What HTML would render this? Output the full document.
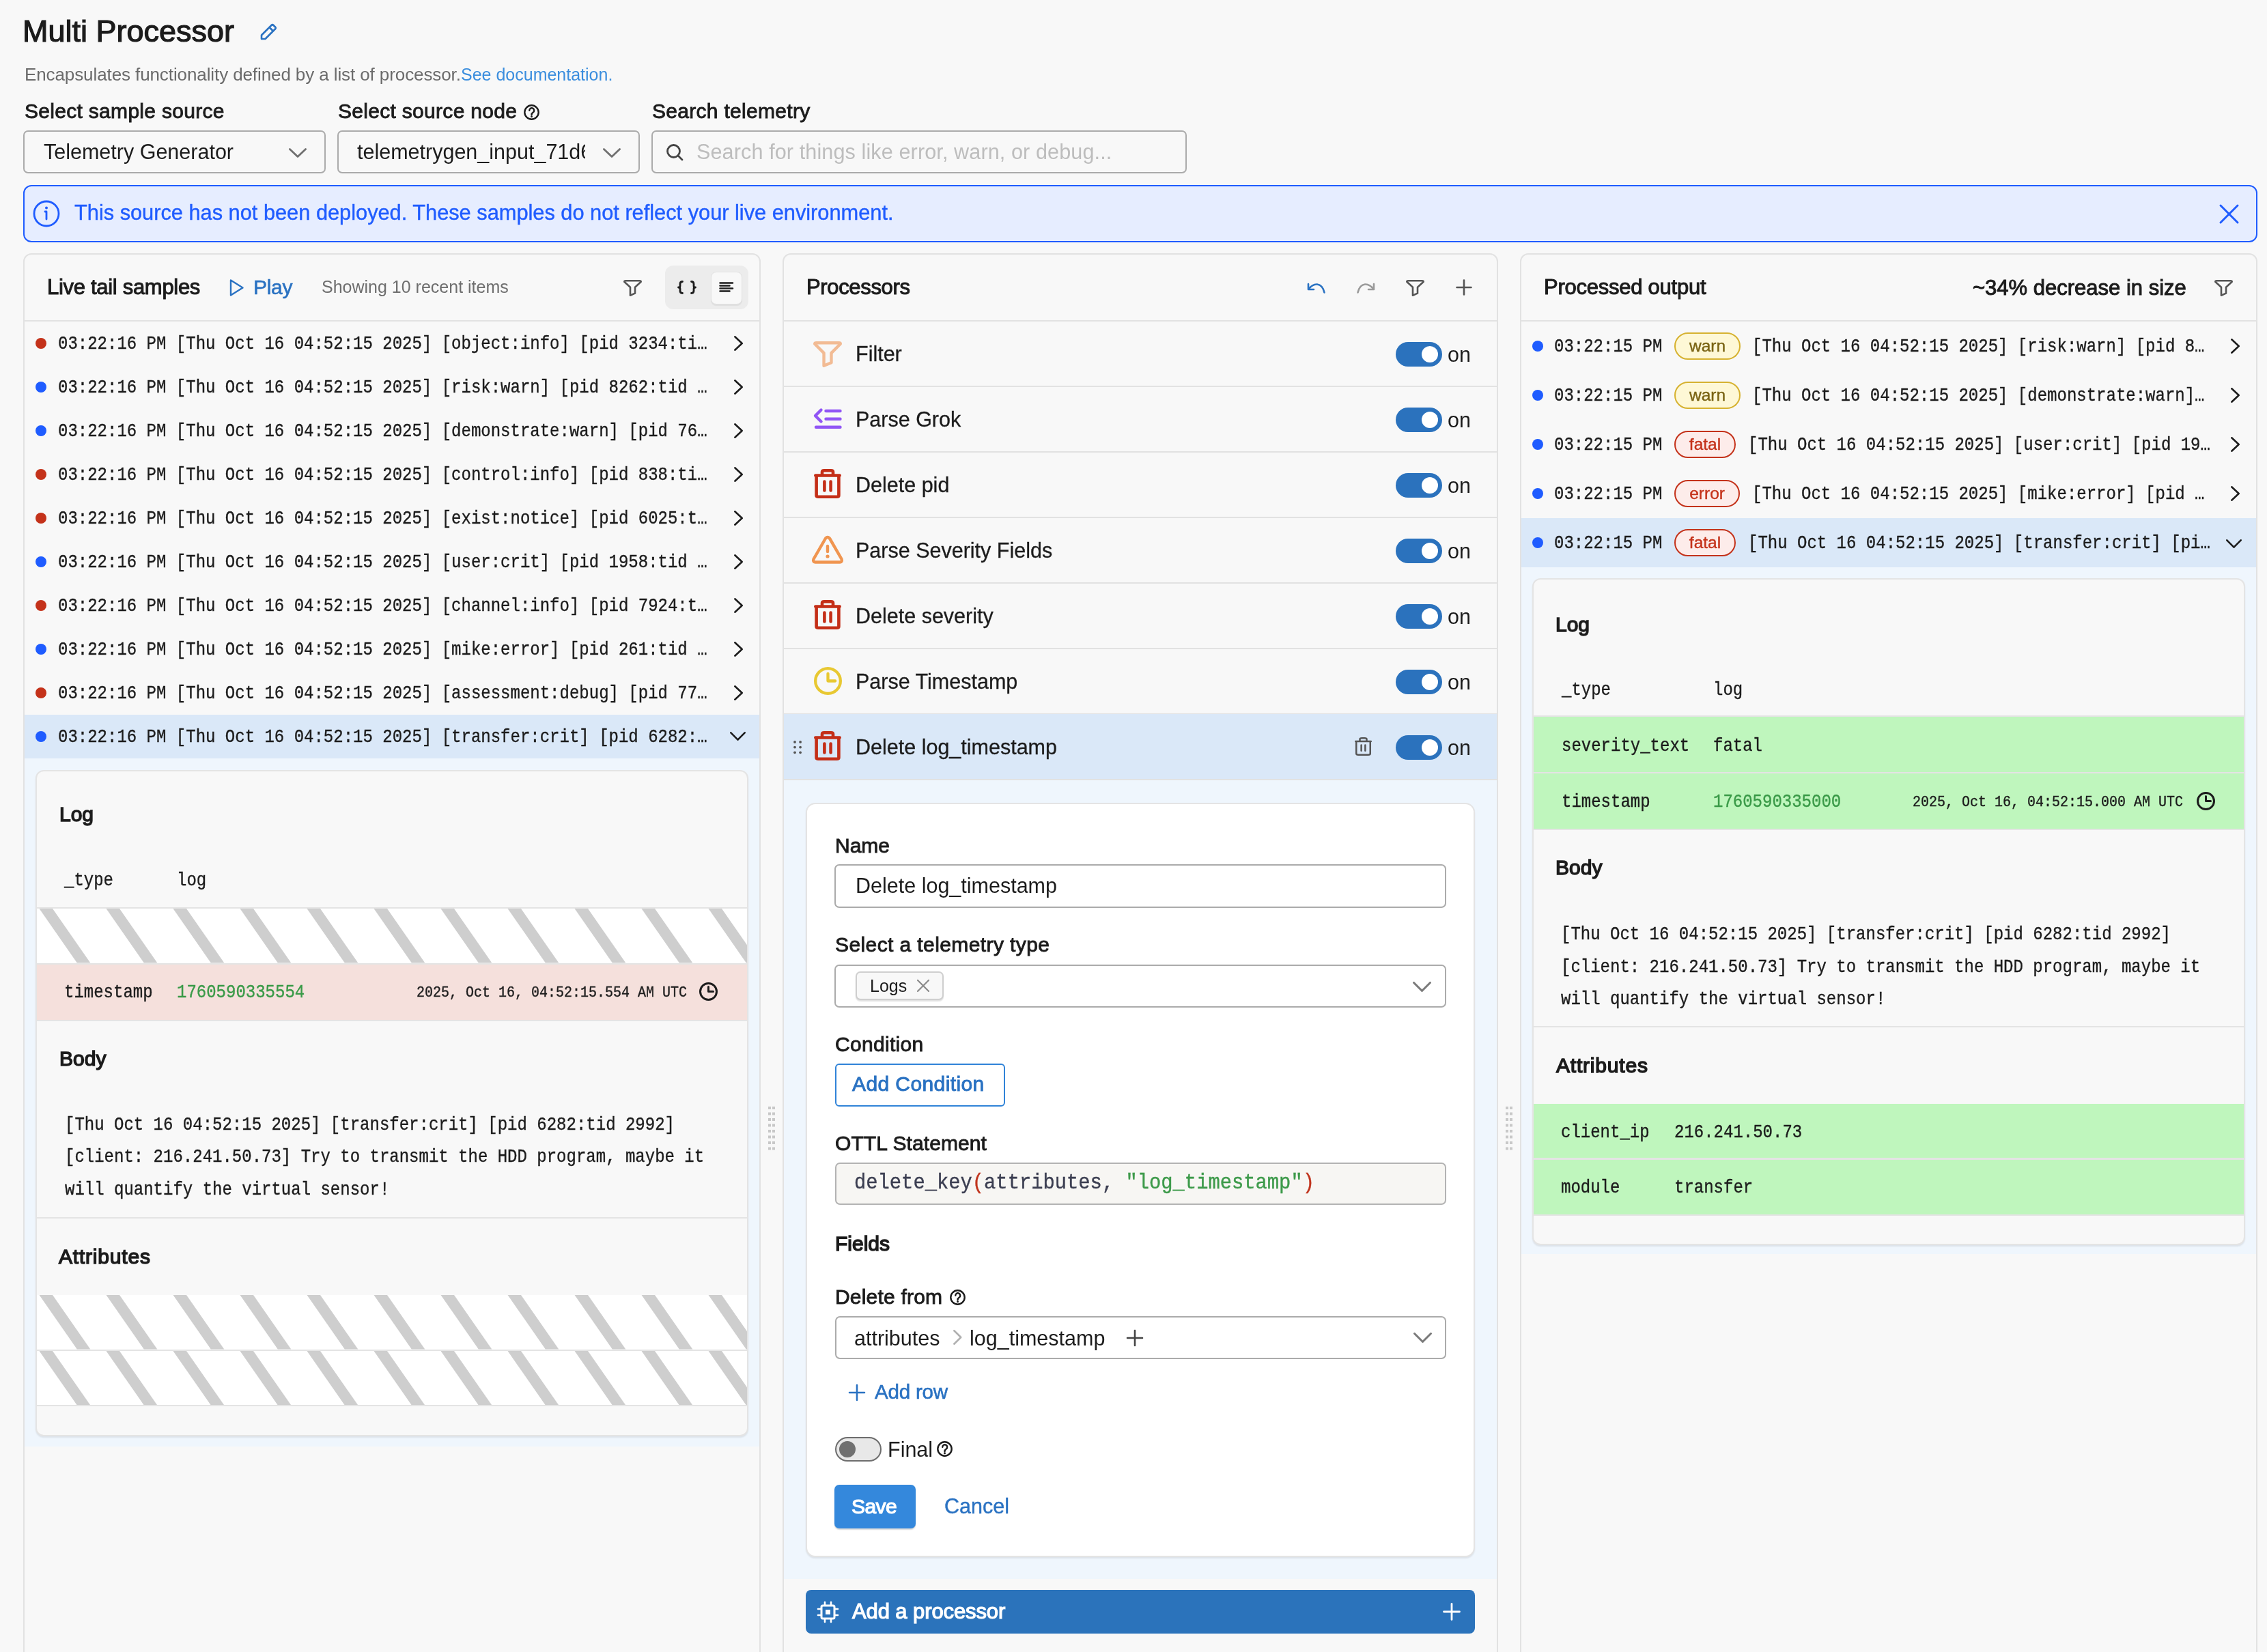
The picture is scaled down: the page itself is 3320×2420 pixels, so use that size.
<!DOCTYPE html><html><head><meta charset="utf-8"><title>Multi Processor</title><style>
html,body{margin:0;padding:0;}
body{width:3320px;height:2420px;overflow:hidden;position:relative;background:#f8f8f8;font-family:"Liberation Sans", sans-serif;}
.t{position:absolute;white-space:pre;line-height:1;will-change:transform;}
.b{position:absolute;box-sizing:border-box;}
</style></head><body>
<div class="t " style="left:33.0px;top:22.9px;font-size:45px;color:#1c1c1c;-webkit-text-stroke:1.2px #1c1c1c;">Multi Processor</div>
<svg class="b" style="left:378px;top:32px;" width="30" height="30" viewBox="0 0 30 30" fill="none"><path d="M5 25 L5 19.5 L19.5 5 Q21 3.5 22.5 5 L25 7.5 Q26.5 9 25 10.5 L10.5 25 Z M16.5 8 L22 13.5" stroke="#2a72c2" stroke-width="2.6" stroke-linejoin="round"/></svg>
<div class="t " style="left:36.0px;top:96.0px;font-size:26px;color:#6b6b6b;letter-spacing:-0.1px;">Encapsulates functionality defined by a list of processor.</div>
<div class="t " style="left:675.0px;top:96.8px;font-size:25px;color:#3b8ede;">See documentation.</div>
<div class="t " style="left:36.0px;top:148.3px;font-size:30px;color:#1c1c1c;letter-spacing:0.3px;-webkit-text-stroke:0.9px #1c1c1c;">Select sample source</div>
<div class="t " style="left:495.0px;top:148.3px;font-size:30px;color:#1c1c1c;letter-spacing:0.3px;-webkit-text-stroke:0.9px #1c1c1c;">Select source node</div>
<svg class="b" style="left:767px;top:153px;" width="23" height="23" viewBox="0 0 23 23" fill="none"><circle cx="11.5" cy="11.5" r="10.2" stroke="#1c1c1c" stroke-width="2.4"/><path d="M8.28 8.74 a3.4499999999999997 3.4499999999999997 0 1 1 5.52 2.76 c-1.84 1.1500000000000001 -2.3000000000000003 2.07 -2.3000000000000003 3.68" stroke="#1c1c1c" stroke-width="2.4" stroke-linecap="round"/><circle cx="11.5" cy="17.71" r="1.5" fill="#1c1c1c"/></svg>
<div class="t " style="left:954.5px;top:148.3px;font-size:30px;color:#1c1c1c;letter-spacing:0.3px;-webkit-text-stroke:0.9px #1c1c1c;">Search telemetry</div>
<div class="b" style="left:34px;top:191px;width:443px;height:63px;border:2.5px solid #ababab;border-radius:7px;"></div>
<div class="b" style="left:494px;top:191px;width:443px;height:63px;border:2.5px solid #ababab;border-radius:7px;"></div>
<div class="t " style="left:64.0px;top:207.1px;font-size:30.5px;color:#1c1c1c;">Telemetry Generator</div>
<svg class="b" style="left:419.0px;top:213.0px;" width="34" height="22" viewBox="0 0 34 22" fill="none"><path d="M5.4 5.4 L17.0 16.6 L28.6 5.4" stroke="#707070" stroke-width="2.8" stroke-linecap="round" stroke-linejoin="round"/></svg>
<div class="b" style="left:520px;top:200px;width:337px;height:46px;overflow:hidden;">
<div class="t " style="left:3.0px;top:7.1px;font-size:30.5px;color:#1c1c1c;">telemetrygen_input_71d6f3</div>
</div>
<svg class="b" style="left:879.0px;top:213.0px;" width="34" height="22" viewBox="0 0 34 22" fill="none"><path d="M5.4 5.4 L17.0 16.6 L28.6 5.4" stroke="#707070" stroke-width="2.8" stroke-linecap="round" stroke-linejoin="round"/></svg>
<div class="b" style="left:954px;top:191px;width:784px;height:63px;border:2.5px solid #ababab;border-radius:7px;"></div>
<svg class="b" style="left:972px;top:208px;" width="32" height="32" viewBox="0 0 32 32" fill="none"><circle cx="14.5" cy="13.5" r="9" stroke="#444" stroke-width="2.8"/><path d="M21 20 L27 26" stroke="#444" stroke-width="2.8" stroke-linecap="round"/></svg>
<div class="t " style="left:1020.0px;top:207.3px;font-size:30.6px;color:#bdbdbd;letter-spacing:0.1px;">Search for things like error, warn, or debug...</div>
<div class="b" style="left:34px;top:271px;width:3272px;height:84px;border:2.5px solid #1f5cff;border-radius:12px;background:#e6edff;"></div>
<svg class="b" style="left:48px;top:293px;" width="40" height="40" viewBox="0 0 40 40" fill="none"><circle cx="20" cy="20" r="18" stroke="#1f5cff" stroke-width="2.8"/><circle cx="20" cy="11.5" r="2" fill="#1f5cff"/><path d="M18 17 H20 V28" stroke="#1f5cff" stroke-width="2.8" stroke-linecap="round" stroke-linejoin="round"/></svg>
<div class="t " style="left:109.0px;top:296.8px;font-size:30.8px;color:#1f5cff;letter-spacing:-0.02px;-webkit-text-stroke:0.4px #1f5cff;">This source has not been deployed. These samples do not reflect your live environment.</div>
<svg class="b" style="left:3248px;top:297px;" width="33" height="33" viewBox="0 0 33 33" fill="none"><path d="M4 4 L29 29 M29 4 L4 29" stroke="#1f5cff" stroke-width="3" stroke-linecap="round"/></svg>
<div class="b" style="left:34px;top:371px;width:1080px;height:2089px;border:2px solid #e2e2e2;border-radius:12px;background:#f8f8f8;"></div>
<div class="b" style="left:36px;top:469px;width:1076px;height:2px;background:#e2e2e2;"></div>
<div class="b" style="left:1146px;top:371px;width:1048px;height:2089px;border:2px solid #e2e2e2;border-radius:12px;background:#f8f8f8;"></div>
<div class="b" style="left:1148px;top:469px;width:1044px;height:2px;background:#e2e2e2;"></div>
<div class="b" style="left:2226px;top:371px;width:1080px;height:2089px;border:2px solid #e2e2e2;border-radius:12px;background:#f8f8f8;"></div>
<div class="b" style="left:2228px;top:469px;width:1076px;height:2px;background:#e2e2e2;"></div>
<svg class="b" style="left:1125px;top:0px;" width="10" height="2420" viewBox="0 0 10 2420" fill="none"><rect x="0" y="1621.0" width="4" height="4" fill="#c8c8c8"/><rect x="6" y="1621.0" width="4" height="4" fill="#c8c8c8"/><rect x="0" y="1629.5" width="4" height="4" fill="#c8c8c8"/><rect x="6" y="1629.5" width="4" height="4" fill="#c8c8c8"/><rect x="0" y="1638.0" width="4" height="4" fill="#c8c8c8"/><rect x="6" y="1638.0" width="4" height="4" fill="#c8c8c8"/><rect x="0" y="1646.5" width="4" height="4" fill="#c8c8c8"/><rect x="6" y="1646.5" width="4" height="4" fill="#c8c8c8"/><rect x="0" y="1655.0" width="4" height="4" fill="#c8c8c8"/><rect x="6" y="1655.0" width="4" height="4" fill="#c8c8c8"/><rect x="0" y="1663.5" width="4" height="4" fill="#c8c8c8"/><rect x="6" y="1663.5" width="4" height="4" fill="#c8c8c8"/><rect x="0" y="1672.0" width="4" height="4" fill="#c8c8c8"/><rect x="6" y="1672.0" width="4" height="4" fill="#c8c8c8"/><rect x="0" y="1680.5" width="4" height="4" fill="#c8c8c8"/><rect x="6" y="1680.5" width="4" height="4" fill="#c8c8c8"/></svg>
<svg class="b" style="left:2205px;top:0px;" width="10" height="2420" viewBox="0 0 10 2420" fill="none"><rect x="0" y="1621.0" width="4" height="4" fill="#c8c8c8"/><rect x="6" y="1621.0" width="4" height="4" fill="#c8c8c8"/><rect x="0" y="1629.5" width="4" height="4" fill="#c8c8c8"/><rect x="6" y="1629.5" width="4" height="4" fill="#c8c8c8"/><rect x="0" y="1638.0" width="4" height="4" fill="#c8c8c8"/><rect x="6" y="1638.0" width="4" height="4" fill="#c8c8c8"/><rect x="0" y="1646.5" width="4" height="4" fill="#c8c8c8"/><rect x="6" y="1646.5" width="4" height="4" fill="#c8c8c8"/><rect x="0" y="1655.0" width="4" height="4" fill="#c8c8c8"/><rect x="6" y="1655.0" width="4" height="4" fill="#c8c8c8"/><rect x="0" y="1663.5" width="4" height="4" fill="#c8c8c8"/><rect x="6" y="1663.5" width="4" height="4" fill="#c8c8c8"/><rect x="0" y="1672.0" width="4" height="4" fill="#c8c8c8"/><rect x="6" y="1672.0" width="4" height="4" fill="#c8c8c8"/><rect x="0" y="1680.5" width="4" height="4" fill="#c8c8c8"/><rect x="6" y="1680.5" width="4" height="4" fill="#c8c8c8"/></svg>
<div class="t " style="left:69.0px;top:405.0px;font-size:31px;color:#1c1c1c;letter-spacing:-0.3px;-webkit-text-stroke:1.0px #1c1c1c;">Live tail samples</div>
<svg class="b" style="left:335px;top:408px;" width="24" height="27" viewBox="0 0 24 27" fill="none"><path d="M3 2.5 L20.5 13.5 L3 24.5 Z" stroke="#2a72c2" stroke-width="2.4" stroke-linejoin="round"/></svg>
<div class="t " style="left:371.0px;top:405.8px;font-size:30px;color:#2a72c2;letter-spacing:-0.3px;-webkit-text-stroke:0.6px #2a72c2;">Play</div>
<div class="t " style="left:471.0px;top:407.8px;font-size:25px;color:#6e6e6e;">Showing 10 recent items</div>
<svg class="b" style="left:913px;top:410px;" width="27" height="24" viewBox="0 0 27 24" fill="none"><path d="M1.3 2.8 Q1.3 1.3 3.3 1.3 L23.7 1.3 Q25.7 1.3 25.7 2.8 L17.01 10.8 L17.01 19.68 L9.99 22.7 L9.99 10.8 Z" stroke="#555555" stroke-width="2.6" stroke-linejoin="round"/></svg>
<div class="b" style="left:974px;top:389px;width:122px;height:64px;background:#ececec;border-radius:12px;"></div>
<div class="b" style="left:1041px;top:398px;width:46px;height:48px;background:#f8f8f8;border-radius:8px;border:1.5px solid #e2e2e2;box-shadow:0 2px 1px rgba(0,0,0,0.06);"></div>
<svg class="b" style="left:990px;top:408px;" width="32" height="26" viewBox="0 0 32 26" fill="none"><path d="M9.5 4.5 Q6 4.5 6 8 L6 11 Q6 13 3.5 13 Q6 13 6 15 L6 18 Q6 21.5 9.5 21.5 M22.5 4.5 Q26 4.5 26 8 L26 11 Q26 13 28.5 13 Q26 13 26 15 L26 18 Q26 21.5 22.5 21.5" stroke="#1c1c1c" stroke-width="2.8" stroke-linecap="round" stroke-linejoin="round"/></svg>
<svg class="b" style="left:1052px;top:411px;" width="24" height="18" viewBox="0 0 24 18" fill="none"><path d="M2.5 3.5 H21 M2.5 7.5 H16.5 M2.5 11.5 H21 M2.5 15.5 H16.5" stroke="#1c1c1c" stroke-width="2.5" stroke-linecap="round"/></svg>
<div class="b" style="left:52px;top:495px;width:16px;height:16px;background:#c4321a;border-radius:50%;"></div>
<div class="t " style="left:85.0px;top:492.6px;font-size:24px;color:#1c1c1c;font-family:'Liberation Mono', monospace;-webkit-text-stroke:0.35px #1c1c1c;transform:scaleY(1.12);transform-origin:0 18.4px;">03:22:16 PM [Thu Oct 16 04:52:15 2025] [object:info] [pid 3234:ti…</div>
<svg class="b" style="left:1070.5px;top:488.0px;" width="21" height="30" viewBox="0 0 21 30" fill="none"><path d="M5.3 5.3 L15.7 15.0 L5.3 24.7" stroke="#1c1c1c" stroke-width="2.6" stroke-linecap="round" stroke-linejoin="round"/></svg>
<div class="b" style="left:52px;top:559px;width:16px;height:16px;background:#1f5cff;border-radius:50%;"></div>
<div class="t " style="left:85.0px;top:556.6px;font-size:24px;color:#1c1c1c;font-family:'Liberation Mono', monospace;-webkit-text-stroke:0.35px #1c1c1c;transform:scaleY(1.12);transform-origin:0 18.4px;">03:22:16 PM [Thu Oct 16 04:52:15 2025] [risk:warn] [pid 8262:tid …</div>
<svg class="b" style="left:1070.5px;top:552.0px;" width="21" height="30" viewBox="0 0 21 30" fill="none"><path d="M5.3 5.3 L15.7 15.0 L5.3 24.7" stroke="#1c1c1c" stroke-width="2.6" stroke-linecap="round" stroke-linejoin="round"/></svg>
<div class="b" style="left:52px;top:623px;width:16px;height:16px;background:#1f5cff;border-radius:50%;"></div>
<div class="t " style="left:85.0px;top:620.6px;font-size:24px;color:#1c1c1c;font-family:'Liberation Mono', monospace;-webkit-text-stroke:0.35px #1c1c1c;transform:scaleY(1.12);transform-origin:0 18.4px;">03:22:16 PM [Thu Oct 16 04:52:15 2025] [demonstrate:warn] [pid 76…</div>
<svg class="b" style="left:1070.5px;top:616.0px;" width="21" height="30" viewBox="0 0 21 30" fill="none"><path d="M5.3 5.3 L15.7 15.0 L5.3 24.7" stroke="#1c1c1c" stroke-width="2.6" stroke-linecap="round" stroke-linejoin="round"/></svg>
<div class="b" style="left:52px;top:687px;width:16px;height:16px;background:#c4321a;border-radius:50%;"></div>
<div class="t " style="left:85.0px;top:684.6px;font-size:24px;color:#1c1c1c;font-family:'Liberation Mono', monospace;-webkit-text-stroke:0.35px #1c1c1c;transform:scaleY(1.12);transform-origin:0 18.4px;">03:22:16 PM [Thu Oct 16 04:52:15 2025] [control:info] [pid 838:ti…</div>
<svg class="b" style="left:1070.5px;top:680.0px;" width="21" height="30" viewBox="0 0 21 30" fill="none"><path d="M5.3 5.3 L15.7 15.0 L5.3 24.7" stroke="#1c1c1c" stroke-width="2.6" stroke-linecap="round" stroke-linejoin="round"/></svg>
<div class="b" style="left:52px;top:751px;width:16px;height:16px;background:#c4321a;border-radius:50%;"></div>
<div class="t " style="left:85.0px;top:748.6px;font-size:24px;color:#1c1c1c;font-family:'Liberation Mono', monospace;-webkit-text-stroke:0.35px #1c1c1c;transform:scaleY(1.12);transform-origin:0 18.4px;">03:22:16 PM [Thu Oct 16 04:52:15 2025] [exist:notice] [pid 6025:t…</div>
<svg class="b" style="left:1070.5px;top:744.0px;" width="21" height="30" viewBox="0 0 21 30" fill="none"><path d="M5.3 5.3 L15.7 15.0 L5.3 24.7" stroke="#1c1c1c" stroke-width="2.6" stroke-linecap="round" stroke-linejoin="round"/></svg>
<div class="b" style="left:52px;top:815px;width:16px;height:16px;background:#1f5cff;border-radius:50%;"></div>
<div class="t " style="left:85.0px;top:812.6px;font-size:24px;color:#1c1c1c;font-family:'Liberation Mono', monospace;-webkit-text-stroke:0.35px #1c1c1c;transform:scaleY(1.12);transform-origin:0 18.4px;">03:22:16 PM [Thu Oct 16 04:52:15 2025] [user:crit] [pid 1958:tid …</div>
<svg class="b" style="left:1070.5px;top:808.0px;" width="21" height="30" viewBox="0 0 21 30" fill="none"><path d="M5.3 5.3 L15.7 15.0 L5.3 24.7" stroke="#1c1c1c" stroke-width="2.6" stroke-linecap="round" stroke-linejoin="round"/></svg>
<div class="b" style="left:52px;top:879px;width:16px;height:16px;background:#c4321a;border-radius:50%;"></div>
<div class="t " style="left:85.0px;top:876.6px;font-size:24px;color:#1c1c1c;font-family:'Liberation Mono', monospace;-webkit-text-stroke:0.35px #1c1c1c;transform:scaleY(1.12);transform-origin:0 18.4px;">03:22:16 PM [Thu Oct 16 04:52:15 2025] [channel:info] [pid 7924:t…</div>
<svg class="b" style="left:1070.5px;top:872.0px;" width="21" height="30" viewBox="0 0 21 30" fill="none"><path d="M5.3 5.3 L15.7 15.0 L5.3 24.7" stroke="#1c1c1c" stroke-width="2.6" stroke-linecap="round" stroke-linejoin="round"/></svg>
<div class="b" style="left:52px;top:943px;width:16px;height:16px;background:#1f5cff;border-radius:50%;"></div>
<div class="t " style="left:85.0px;top:940.6px;font-size:24px;color:#1c1c1c;font-family:'Liberation Mono', monospace;-webkit-text-stroke:0.35px #1c1c1c;transform:scaleY(1.12);transform-origin:0 18.4px;">03:22:16 PM [Thu Oct 16 04:52:15 2025] [mike:error] [pid 261:tid …</div>
<svg class="b" style="left:1070.5px;top:936.0px;" width="21" height="30" viewBox="0 0 21 30" fill="none"><path d="M5.3 5.3 L15.7 15.0 L5.3 24.7" stroke="#1c1c1c" stroke-width="2.6" stroke-linecap="round" stroke-linejoin="round"/></svg>
<div class="b" style="left:52px;top:1007px;width:16px;height:16px;background:#c4321a;border-radius:50%;"></div>
<div class="t " style="left:85.0px;top:1004.6px;font-size:24px;color:#1c1c1c;font-family:'Liberation Mono', monospace;-webkit-text-stroke:0.35px #1c1c1c;transform:scaleY(1.12);transform-origin:0 18.4px;">03:22:16 PM [Thu Oct 16 04:52:15 2025] [assessment:debug] [pid 77…</div>
<svg class="b" style="left:1070.5px;top:1000.0px;" width="21" height="30" viewBox="0 0 21 30" fill="none"><path d="M5.3 5.3 L15.7 15.0 L5.3 24.7" stroke="#1c1c1c" stroke-width="2.6" stroke-linecap="round" stroke-linejoin="round"/></svg>
<div class="b" style="left:36px;top:1047px;width:1076px;height:64px;background:#dae8f8;"></div>
<div class="b" style="left:52px;top:1071px;width:16px;height:16px;background:#1f5cff;border-radius:50%;"></div>
<div class="t " style="left:85.0px;top:1068.6px;font-size:24px;color:#1c1c1c;font-family:'Liberation Mono', monospace;-webkit-text-stroke:0.35px #1c1c1c;transform:scaleY(1.12);transform-origin:0 18.4px;">03:22:16 PM [Thu Oct 16 04:52:15 2025] [transfer:crit] [pid 6282:…</div>
<svg class="b" style="left:1065.0px;top:1067.5px;" width="31" height="21" viewBox="0 0 31 21" fill="none"><path d="M5.3 5.3 L15.5 15.7 L25.7 5.3" stroke="#1c1c1c" stroke-width="2.6" stroke-linecap="round" stroke-linejoin="round"/></svg>
<div class="b" style="left:36px;top:1111px;width:1076px;height:1008px;background:#eff6fd;"></div>
<div class="b" style="left:52px;top:1128px;width:1044px;height:976px;background:#f8f8f8;border:2px solid #e4e4e4;border-radius:12px;box-shadow:0 2px 2px rgba(0,0,0,0.08);"></div>
<div class="t " style="left:86.5px;top:1178.0px;font-size:30px;color:#1c1c1c;-webkit-text-stroke:1.5px #1c1c1c;">Log</div>
<div class="t " style="left:94.0px;top:1278.6px;font-size:24px;color:#1c1c1c;font-family:'Liberation Mono', monospace;-webkit-text-stroke:0.35px #1c1c1c;transform:scaleY(1.12);transform-origin:0 18.4px;">_type</div>
<div class="t " style="left:259.0px;top:1278.6px;font-size:24px;color:#1c1c1c;font-family:'Liberation Mono', monospace;-webkit-text-stroke:0.35px #1c1c1c;transform:scaleY(1.12);transform-origin:0 18.4px;">log</div>
<div class="b" style="left:54px;top:1329px;width:1040px;height:2px;background:#e4e4e4;"></div>
<svg class="b" style="left:54px;top:1331px;" width="1040" height="79.5" viewBox="0 0 1040 79.5" fill="none"><rect width="1040" height="79.5" fill="#ffffff"/><g fill="#cecece"><polygon points="-192.5,0 -173.0,0 -117.7,79.5 -137.2,79.5"/><polygon points="-94.5,0 -75.0,0 -19.7,79.5 -39.2,79.5"/><polygon points="3.5,0 23.0,0 78.3,79.5 58.8,79.5"/><polygon points="101.5,0 121.0,0 176.3,79.5 156.8,79.5"/><polygon points="199.5,0 219.0,0 274.3,79.5 254.8,79.5"/><polygon points="297.5,0 317.0,0 372.3,79.5 352.8,79.5"/><polygon points="395.5,0 415.0,0 470.3,79.5 450.8,79.5"/><polygon points="493.5,0 513.0,0 568.3,79.5 548.8,79.5"/><polygon points="591.5,0 611.0,0 666.3,79.5 646.8,79.5"/><polygon points="689.5,0 709.0,0 764.3,79.5 744.8,79.5"/><polygon points="787.5,0 807.0,0 862.3,79.5 842.8,79.5"/><polygon points="885.5,0 905.0,0 960.3,79.5 940.8,79.5"/><polygon points="983.5,0 1003.0,0 1058.3,79.5 1038.8,79.5"/><polygon points="1081.5,0 1101.0,0 1156.3,79.5 1136.8,79.5"/></g></svg>
<div class="b" style="left:54px;top:1410.5px;width:1040px;height:2.0px;background:#e4e4e4;"></div>
<div class="b" style="left:54px;top:1412.5px;width:1040px;height:81.5px;background:#f5e0dc;"></div>
<div class="b" style="left:54px;top:1494px;width:1040px;height:2px;background:#e4e4e4;"></div>
<div class="t " style="left:94.0px;top:1442.6px;font-size:24px;color:#1c1c1c;font-family:'Liberation Mono', monospace;-webkit-text-stroke:0.35px #1c1c1c;transform:scaleY(1.12);transform-origin:0 18.4px;">timestamp</div>
<div class="t " style="left:259.0px;top:1442.6px;font-size:24px;color:#3a9a48;font-family:'Liberation Mono', monospace;-webkit-text-stroke:0.35px #3a9a48;transform:scaleY(1.12);transform-origin:0 18.4px;">1760590335554</div>
<div class="t " style="left:610.0px;top:1445.0px;font-size:20px;color:#1c1c1c;font-family:'Liberation Mono', monospace;-webkit-text-stroke:0.35px #1c1c1c;transform:scaleY(1.12);transform-origin:0 15.3px;">2025, Oct 16, 04:52:15.554 AM UTC</div>
<svg class="b" style="left:1024.2px;top:1439.3px;" width="27" height="27" viewBox="0 0 27 27" fill="none"><circle cx="13.5" cy="13.5" r="12.0" stroke="#1c1c1c" stroke-width="3"/><path d="M13.5 6.4799999999999995 V13.5 H20.52" stroke="#1c1c1c" stroke-width="3" stroke-linecap="round" stroke-linejoin="round"/></svg>
<div class="t " style="left:86.5px;top:1535.9px;font-size:30px;color:#1c1c1c;-webkit-text-stroke:1.5px #1c1c1c;">Body</div>
<div class="t " style="left:95.0px;top:1636.9px;font-size:24px;color:#1c1c1c;font-family:'Liberation Mono', monospace;-webkit-text-stroke:0.35px #1c1c1c;transform:scaleY(1.12);transform-origin:0 18.4px;">[Thu Oct 16 04:52:15 2025] [transfer:crit] [pid 6282:tid 2992]</div>
<div class="t " style="left:95.0px;top:1684.4px;font-size:24px;color:#1c1c1c;font-family:'Liberation Mono', monospace;-webkit-text-stroke:0.35px #1c1c1c;transform:scaleY(1.12);transform-origin:0 18.4px;">[client: 216.241.50.73] Try to transmit the HDD program, maybe it</div>
<div class="t " style="left:95.0px;top:1731.9px;font-size:24px;color:#1c1c1c;font-family:'Liberation Mono', monospace;-webkit-text-stroke:0.35px #1c1c1c;transform:scaleY(1.12);transform-origin:0 18.4px;">will quantify the virtual sensor!</div>
<div class="b" style="left:54px;top:1783px;width:1040px;height:2px;background:#e4e4e4;"></div>
<div class="t " style="left:85.5px;top:1825.6px;font-size:30px;color:#1c1c1c;letter-spacing:0.8px;-webkit-text-stroke:1.5px #1c1c1c;">Attributes</div>
<svg class="b" style="left:54px;top:1897px;" width="1040" height="79.5" viewBox="0 0 1040 79.5" fill="none"><rect width="1040" height="79.5" fill="#ffffff"/><g fill="#cecece"><polygon points="-192.5,0 -173.0,0 -117.7,79.5 -137.2,79.5"/><polygon points="-94.5,0 -75.0,0 -19.7,79.5 -39.2,79.5"/><polygon points="3.5,0 23.0,0 78.3,79.5 58.8,79.5"/><polygon points="101.5,0 121.0,0 176.3,79.5 156.8,79.5"/><polygon points="199.5,0 219.0,0 274.3,79.5 254.8,79.5"/><polygon points="297.5,0 317.0,0 372.3,79.5 352.8,79.5"/><polygon points="395.5,0 415.0,0 470.3,79.5 450.8,79.5"/><polygon points="493.5,0 513.0,0 568.3,79.5 548.8,79.5"/><polygon points="591.5,0 611.0,0 666.3,79.5 646.8,79.5"/><polygon points="689.5,0 709.0,0 764.3,79.5 744.8,79.5"/><polygon points="787.5,0 807.0,0 862.3,79.5 842.8,79.5"/><polygon points="885.5,0 905.0,0 960.3,79.5 940.8,79.5"/><polygon points="983.5,0 1003.0,0 1058.3,79.5 1038.8,79.5"/><polygon points="1081.5,0 1101.0,0 1156.3,79.5 1136.8,79.5"/></g></svg>
<div class="b" style="left:54px;top:1976.5px;width:1040px;height:2.5px;background:#e4e4e4;"></div>
<svg class="b" style="left:54px;top:1979px;" width="1040" height="79" viewBox="0 0 1040 79" fill="none"><rect width="1040" height="79" fill="#ffffff"/><g fill="#cecece"><polygon points="-192.5,0 -173.0,0 -118.0,79 -137.5,79"/><polygon points="-94.5,0 -75.0,0 -20.0,79 -39.5,79"/><polygon points="3.5,0 23.0,0 78.0,79 58.5,79"/><polygon points="101.5,0 121.0,0 176.0,79 156.5,79"/><polygon points="199.5,0 219.0,0 274.0,79 254.5,79"/><polygon points="297.5,0 317.0,0 372.0,79 352.5,79"/><polygon points="395.5,0 415.0,0 470.0,79 450.5,79"/><polygon points="493.5,0 513.0,0 568.0,79 548.5,79"/><polygon points="591.5,0 611.0,0 666.0,79 646.5,79"/><polygon points="689.5,0 709.0,0 764.0,79 744.5,79"/><polygon points="787.5,0 807.0,0 862.0,79 842.5,79"/><polygon points="885.5,0 905.0,0 960.0,79 940.5,79"/><polygon points="983.5,0 1003.0,0 1058.0,79 1038.5,79"/><polygon points="1081.5,0 1101.0,0 1156.0,79 1136.5,79"/></g></svg>
<div class="b" style="left:54px;top:2058px;width:1040px;height:2px;background:#e4e4e4;"></div>
<div class="t " style="left:1181.0px;top:405.0px;font-size:31px;color:#1c1c1c;letter-spacing:-0.35px;-webkit-text-stroke:1.0px #1c1c1c;">Processors</div>
<svg class="b" style="left:1910px;top:410px;" width="34" height="24" viewBox="0 0 34 24" fill="none"><path d="M6 6 V14 H14" stroke="#2a72c2" stroke-width="2.6" stroke-linecap="round" stroke-linejoin="round"/><path d="M6.5 13.5 Q12 6 19 6.5 Q27 7.5 29.5 18.5" stroke="#2a72c2" stroke-width="2.6" stroke-linecap="round"/></svg>
<svg class="b" style="left:1984px;top:410px;" width="34" height="24" viewBox="0 0 34 24" fill="none"><path d="M28 6 V14 H20" stroke="#9a9a9a" stroke-width="2.6" stroke-linecap="round" stroke-linejoin="round"/><path d="M27.5 13.5 Q22 6 15 6.5 Q7 7.5 4.5 18.5" stroke="#9a9a9a" stroke-width="2.6" stroke-linecap="round"/></svg>
<svg class="b" style="left:2059px;top:410px;" width="27" height="24" viewBox="0 0 27 24" fill="none"><path d="M1.3 2.8 Q1.3 1.3 3.3 1.3 L23.7 1.3 Q25.7 1.3 25.7 2.8 L17.01 10.8 L17.01 19.68 L9.99 22.7 L9.99 10.8 Z" stroke="#555555" stroke-width="2.6" stroke-linejoin="round"/></svg>
<svg class="b" style="left:2130px;top:407px;" width="28" height="28" viewBox="0 0 28 28" fill="none"><path d="M14 3.5 V24.5 M3.5 14 H24.5" stroke="#555555" stroke-width="2.6" stroke-linecap="round"/></svg>
<div class="b" style="left:1148px;top:565px;width:1044px;height:2px;background:#e2e2e2;"></div>
<div class="t " style="left:1253.0px;top:503.2px;font-size:30.5px;color:#1c1c1c;-webkit-text-stroke:0.3px #1c1c1c;">Filter</div>
<div class="b" style="left:2044px;top:500.5px;width:68px;height:36.0px;background:#2b72bd;border-radius:18px;"></div>
<div class="b" style="left:2082px;top:506.5px;width:24px;height:24.0px;background:#ffffff;border-radius:50%;"></div>
<div class="t " style="left:2120.0px;top:504.2px;font-size:30.5px;color:#1c1c1c;">on</div>
<div class="b" style="left:1148px;top:661px;width:1044px;height:2px;background:#e2e2e2;"></div>
<div class="t " style="left:1253.0px;top:599.2px;font-size:30.5px;color:#1c1c1c;-webkit-text-stroke:0.3px #1c1c1c;">Parse Grok</div>
<div class="b" style="left:2044px;top:596.5px;width:68px;height:36.0px;background:#2b72bd;border-radius:18px;"></div>
<div class="b" style="left:2082px;top:602.5px;width:24px;height:24.0px;background:#ffffff;border-radius:50%;"></div>
<div class="t " style="left:2120.0px;top:600.2px;font-size:30.5px;color:#1c1c1c;">on</div>
<div class="b" style="left:1148px;top:757px;width:1044px;height:2px;background:#e2e2e2;"></div>
<div class="t " style="left:1253.0px;top:695.2px;font-size:30.5px;color:#1c1c1c;-webkit-text-stroke:0.3px #1c1c1c;">Delete pid</div>
<div class="b" style="left:2044px;top:692.5px;width:68px;height:36.0px;background:#2b72bd;border-radius:18px;"></div>
<div class="b" style="left:2082px;top:698.5px;width:24px;height:24.0px;background:#ffffff;border-radius:50%;"></div>
<div class="t " style="left:2120.0px;top:696.2px;font-size:30.5px;color:#1c1c1c;">on</div>
<div class="b" style="left:1148px;top:853px;width:1044px;height:2px;background:#e2e2e2;"></div>
<div class="t " style="left:1253.0px;top:791.2px;font-size:30.5px;color:#1c1c1c;-webkit-text-stroke:0.3px #1c1c1c;">Parse Severity Fields</div>
<div class="b" style="left:2044px;top:788.5px;width:68px;height:36.0px;background:#2b72bd;border-radius:18px;"></div>
<div class="b" style="left:2082px;top:794.5px;width:24px;height:24.0px;background:#ffffff;border-radius:50%;"></div>
<div class="t " style="left:2120.0px;top:792.2px;font-size:30.5px;color:#1c1c1c;">on</div>
<div class="b" style="left:1148px;top:949px;width:1044px;height:2px;background:#e2e2e2;"></div>
<div class="t " style="left:1253.0px;top:887.2px;font-size:30.5px;color:#1c1c1c;-webkit-text-stroke:0.3px #1c1c1c;">Delete severity</div>
<div class="b" style="left:2044px;top:884.5px;width:68px;height:36.0px;background:#2b72bd;border-radius:18px;"></div>
<div class="b" style="left:2082px;top:890.5px;width:24px;height:24.0px;background:#ffffff;border-radius:50%;"></div>
<div class="t " style="left:2120.0px;top:888.2px;font-size:30.5px;color:#1c1c1c;">on</div>
<div class="b" style="left:1148px;top:1045px;width:1044px;height:2px;background:#e2e2e2;"></div>
<div class="t " style="left:1253.0px;top:983.2px;font-size:30.5px;color:#1c1c1c;-webkit-text-stroke:0.3px #1c1c1c;">Parse Timestamp</div>
<div class="b" style="left:2044px;top:980.5px;width:68px;height:36.0px;background:#2b72bd;border-radius:18px;"></div>
<div class="b" style="left:2082px;top:986.5px;width:24px;height:24.0px;background:#ffffff;border-radius:50%;"></div>
<div class="t " style="left:2120.0px;top:984.2px;font-size:30.5px;color:#1c1c1c;">on</div>
<div class="b" style="left:1148px;top:1046px;width:1044px;height:96px;background:#dae8f8;"></div>
<div class="t " style="left:1253.0px;top:1079.2px;font-size:30.5px;color:#1c1c1c;-webkit-text-stroke:0.3px #1c1c1c;">Delete log_timestamp</div>
<div class="b" style="left:2044px;top:1076.5px;width:68px;height:36.0px;background:#2b72bd;border-radius:18px;"></div>
<div class="b" style="left:2082px;top:1082.5px;width:24px;height:24.0px;background:#ffffff;border-radius:50%;"></div>
<div class="t " style="left:2120.0px;top:1080.2px;font-size:30.5px;color:#1c1c1c;">on</div>
<div class="b" style="left:1148px;top:1141px;width:1044px;height:2px;background:#e2e2e2;"></div>
<svg class="b" style="left:1191px;top:500px;" width="42" height="38" viewBox="0 0 42 38" fill="none"><path d="M2.2 3.7 Q2.2 2.2 4.2 2.2 L37.8 2.2 Q39.8 2.2 39.8 3.7 L26.46 17.1 L26.46 31.159999999999997 L15.54 35.8 L15.54 17.1 Z" stroke="#f2bb94" stroke-width="4.4" stroke-linejoin="round"/></svg>
<svg class="b" style="left:1190px;top:596px;" width="44" height="34" viewBox="0 0 44 34" fill="none"><path d="M12.5 4.5 L4 13 L12.5 21.5" stroke="#9155f5" stroke-width="4.4" stroke-linecap="round" stroke-linejoin="round"/><path d="M19.5 6 H40.5 M19.5 17.8 H40.5 M5 29.8 H40.5" stroke="#9155f5" stroke-width="4.4" stroke-linecap="round"/></svg>
<svg class="b" style="left:1192px;top:686.5px;" width="40" height="43" viewBox="0 0 40 43" fill="none"><path d="M2.3 9.46 H37.7 M3.5999999999999996 10.32 V38.7 Q3.5999999999999996 40.7 6.6 40.7 H33.4 Q36.4 40.7 36.4 38.7 V10.32 M12.0 9.03 V4.3 Q12.0 2.3 15.0 2.3 H25.0 Q28.0 2.3 28.0 4.3 V9.03 M15.4 18.49 V31.39 M24.6 18.49 V31.39" stroke="#c42e17" stroke-width="4.6" stroke-linecap="round" stroke-linejoin="round"/></svg>
<svg class="b" style="left:1192px;top:878.5px;" width="40" height="43" viewBox="0 0 40 43" fill="none"><path d="M2.3 9.46 H37.7 M3.5999999999999996 10.32 V38.7 Q3.5999999999999996 40.7 6.6 40.7 H33.4 Q36.4 40.7 36.4 38.7 V10.32 M12.0 9.03 V4.3 Q12.0 2.3 15.0 2.3 H25.0 Q28.0 2.3 28.0 4.3 V9.03 M15.4 18.49 V31.39 M24.6 18.49 V31.39" stroke="#c42e17" stroke-width="4.6" stroke-linecap="round" stroke-linejoin="round"/></svg>
<svg class="b" style="left:1192px;top:1070.5px;" width="40" height="43" viewBox="0 0 40 43" fill="none"><path d="M2.3 9.46 H37.7 M3.5999999999999996 10.32 V38.7 Q3.5999999999999996 40.7 6.6 40.7 H33.4 Q36.4 40.7 36.4 38.7 V10.32 M12.0 9.03 V4.3 Q12.0 2.3 15.0 2.3 H25.0 Q28.0 2.3 28.0 4.3 V9.03 M15.4 18.49 V31.39 M24.6 18.49 V31.39" stroke="#c42e17" stroke-width="4.6" stroke-linecap="round" stroke-linejoin="round"/></svg>
<svg class="b" style="left:1188px;top:783px;" width="48" height="44" viewBox="0 0 48 44" fill="none"><path d="M24 4 Q26 4 27.5 6.5 L44.5 36 Q46 40 42 40.5 L6 40.5 Q2 40 3.5 36 L20.5 6.5 Q22 4 24 4 Z" stroke="#f09550" stroke-width="4.4" stroke-linejoin="round"/><path d="M24 17 V25" stroke="#f09550" stroke-width="4.4" stroke-linecap="round"/><circle cx="24" cy="32" r="2.6" fill="#f09550"/></svg>
<svg class="b" style="left:1191.5px;top:977.3px;" width="41" height="41" viewBox="0 0 41 41" fill="none"><circle cx="20.5" cy="20.5" r="18.35" stroke="#e8c832" stroke-width="4.3"/><path d="M20.5 9.84 V20.5 H31.16" stroke="#e8c832" stroke-width="4.3" stroke-linecap="round" stroke-linejoin="round"/></svg>
<svg class="b" style="left:1162.3px;top:1084.6px;" width="13" height="20" viewBox="0 0 13 20" fill="none"><circle cx="2" cy="2" r="1.9" fill="#555"/><circle cx="2" cy="9.6" r="1.9" fill="#555"/><circle cx="2" cy="17.3" r="1.9" fill="#555"/><circle cx="10.1" cy="2" r="1.9" fill="#555"/><circle cx="10.1" cy="9.6" r="1.9" fill="#555"/><circle cx="10.1" cy="17.3" r="1.9" fill="#555"/></svg>
<svg class="b" style="left:1984px;top:1080px;" width="25" height="27" viewBox="0 0 25 27" fill="none"><path d="M1.25 5.94 H23.75 M2.25 6.4799999999999995 V23.75 Q2.25 25.75 5.25 25.75 H19.75 Q22.75 25.75 22.75 23.75 V6.4799999999999995 M7.5 5.67 V2.7 Q7.5 1.25 10.5 1.25 H14.5 Q17.5 1.25 17.5 2.7 V5.67 M9.625 11.61 V19.71 M15.375 11.61 V19.71" stroke="#555555" stroke-width="2.5" stroke-linecap="round" stroke-linejoin="round"/></svg>
<div class="b" style="left:1148px;top:1143px;width:1044px;height:1169.5px;background:#eff6fd;"></div>
<div class="b" style="left:1180px;top:1176px;width:980px;height:1105px;background:#ffffff;border:2px solid #e4e4e4;border-radius:14px;box-shadow:0 2px 2px rgba(0,0,0,0.08);"></div>
<div class="t " style="left:1222.5px;top:1223.6px;font-size:30px;color:#1c1c1c;-webkit-text-stroke:0.9px #1c1c1c;">Name</div>
<div class="b" style="left:1222px;top:1266px;width:896px;height:63.5px;border:2.5px solid #ababab;border-radius:7px;"></div>
<div class="t " style="left:1253.0px;top:1282.2px;font-size:30.5px;color:#1c1c1c;">Delete log_timestamp</div>
<div class="t " style="left:1222.5px;top:1368.6px;font-size:30px;color:#1c1c1c;letter-spacing:0.4px;-webkit-text-stroke:0.9px #1c1c1c;">Select a telemetry type</div>
<div class="b" style="left:1222px;top:1412.5px;width:896px;height:63.0px;border:2.5px solid #ababab;border-radius:7px;"></div>
<div class="b" style="left:1253px;top:1423px;width:129px;height:41.5px;background:#f8f8f8;border:2px solid #cfcfcf;border-radius:7px;box-shadow:0 2px 1.5px rgba(0,0,0,0.12);"></div>
<div class="t " style="left:1274.0px;top:1432.0px;font-size:25px;color:#1c1c1c;">Logs</div>
<svg class="b" style="left:1340px;top:1431.5px;" width="24" height="24" viewBox="0 0 24 24" fill="none"><path d="M4 4 L20 20 M20 4 L4 20" stroke="#8a8a8a" stroke-width="2.2" stroke-linecap="round"/></svg>
<svg class="b" style="left:2064.5px;top:1433.5px;" width="35" height="23" viewBox="0 0 35 23" fill="none"><path d="M5.5 5.5 L17.5 17.5 L29.5 5.5" stroke="#7a7a7a" stroke-width="3" stroke-linecap="round" stroke-linejoin="round"/></svg>
<div class="t " style="left:1222.5px;top:1515.1px;font-size:30px;color:#1c1c1c;letter-spacing:0.3px;-webkit-text-stroke:0.9px #1c1c1c;">Condition</div>
<div class="b" style="left:1222.5px;top:1557.5px;width:249.5px;height:63.0px;border:2.8px solid #3083d8;border-radius:6px;"></div>
<div class="t " style="left:1248.0px;top:1572.6px;font-size:30px;color:#2a72c2;letter-spacing:0.4px;-webkit-text-stroke:0.9px #2a72c2;">Add Condition</div>
<div class="t " style="left:1222.5px;top:1659.9px;font-size:30px;color:#1c1c1c;letter-spacing:0.1px;-webkit-text-stroke:0.9px #1c1c1c;">OTTL Statement</div>
<div class="b" style="left:1222.5px;top:1702.5px;width:895.5px;height:62.5px;border:2.5px solid #b3b3b3;border-radius:7px;background:#f7f6f3;"></div>
<div class="t" style="left:1251px;top:1720.1px;font-size:28.8px;font-family:'Liberation Mono', monospace;color:#3b3e51;-webkit-text-stroke:0.35px currentColor;transform:scaleY(1.1);transform-origin:0 22px;">delete_key<span style="color:#c0341d">(</span>attributes, <span style="color:#3d9a4a">"log_timestamp"</span><span style="color:#c0341d">)</span></div>
<div class="t " style="left:1222.5px;top:1806.8px;font-size:30px;color:#1c1c1c;-webkit-text-stroke:1.5px #1c1c1c;">Fields</div>
<div class="t " style="left:1222.5px;top:1884.6px;font-size:30px;color:#1c1c1c;letter-spacing:0.2px;-webkit-text-stroke:0.9px #1c1c1c;">Delete from</div>
<svg class="b" style="left:1390.5px;top:1888.5px;" width="23" height="23" viewBox="0 0 23 23" fill="none"><circle cx="11.5" cy="11.5" r="10.2" stroke="#1c1c1c" stroke-width="2.4"/><path d="M8.28 8.74 a3.4499999999999997 3.4499999999999997 0 1 1 5.52 2.76 c-1.84 1.1500000000000001 -2.3000000000000003 2.07 -2.3000000000000003 3.68" stroke="#1c1c1c" stroke-width="2.4" stroke-linecap="round"/><circle cx="11.5" cy="17.71" r="1.5" fill="#1c1c1c"/></svg>
<div class="b" style="left:1222.5px;top:1927.5px;width:895.5px;height:63.0px;border:2.5px solid #ababab;border-radius:7px;"></div>
<div class="t " style="left:1251.0px;top:1944.6px;font-size:30.5px;color:#1c1c1c;">attributes</div>
<svg class="b" style="left:1391.75px;top:1944.0px;" width="20.5" height="30" viewBox="0 0 20.5 30" fill="none"><path d="M5.3 5.3 L15.2 15.0 L5.3 24.7" stroke="#b0b0b0" stroke-width="2.6" stroke-linecap="round" stroke-linejoin="round"/></svg>
<div class="t " style="left:1420.0px;top:1944.6px;font-size:30.5px;color:#1c1c1c;">log_timestamp</div>
<svg class="b" style="left:1648px;top:1946px;" width="28" height="28" viewBox="0 0 28 28" fill="none"><path d="M14 3 V25 M3 14 H25" stroke="#444" stroke-width="2.6" stroke-linecap="round"/></svg>
<svg class="b" style="left:2065.5px;top:1947.5px;" width="35" height="23" viewBox="0 0 35 23" fill="none"><path d="M5.5 5.5 L17.5 17.5 L29.5 5.5" stroke="#7a7a7a" stroke-width="3" stroke-linecap="round" stroke-linejoin="round"/></svg>
<svg class="b" style="left:1241px;top:2026px;" width="28" height="28" viewBox="0 0 28 28" fill="none"><path d="M14 3 V25 M3 14 H25" stroke="#2a72c2" stroke-width="2.6" stroke-linecap="round"/></svg>
<div class="t " style="left:1281.0px;top:2023.8px;font-size:29.5px;color:#2a72c2;letter-spacing:-0.2px;-webkit-text-stroke:0.6px #2a72c2;">Add row</div>
<div class="b" style="left:1222.5px;top:2105px;width:68.5px;height:35.5px;background:#e8e8e8;border:2.2px solid #6d6d6d;border-radius:18px;"></div>
<div class="b" style="left:1228.6px;top:2110.5px;width:24.40000000000009px;height:24.5px;background:#707070;border-radius:50%;"></div>
<div class="t " style="left:1300.0px;top:2107.7px;font-size:30.5px;color:#1c1c1c;">Final</div>
<svg class="b" style="left:1371.5px;top:2111px;" width="23" height="23" viewBox="0 0 23 23" fill="none"><circle cx="11.5" cy="11.5" r="10.2" stroke="#1c1c1c" stroke-width="2.4"/><path d="M8.28 8.74 a3.4499999999999997 3.4499999999999997 0 1 1 5.52 2.76 c-1.84 1.1500000000000001 -2.3000000000000003 2.07 -2.3000000000000003 3.68" stroke="#1c1c1c" stroke-width="2.4" stroke-linecap="round"/><circle cx="11.5" cy="17.71" r="1.5" fill="#1c1c1c"/></svg>
<div class="b" style="left:1222px;top:2175px;width:119px;height:63.5px;background:#3488dc;border-radius:7px;box-shadow:0 1.5px 1.5px rgba(0,0,0,0.15);"></div>
<div class="t " style="left:1247.0px;top:2191.8px;font-size:30px;color:#ffffff;letter-spacing:-0.6px;-webkit-text-stroke:1.2px #ffffff;">Save</div>
<div class="t " style="left:1383.0px;top:2191.4px;font-size:30.5px;color:#2a72c2;-webkit-text-stroke:0.4px #2a72c2;">Cancel</div>
<div class="b" style="left:1180px;top:2329px;width:980px;height:63.5px;background:#2b73bb;border-radius:8px;"></div>
<svg class="b" style="left:1196px;top:2345px;" width="33" height="33" viewBox="0 0 33 33" fill="none"><rect x="7" y="7" width="19" height="19" rx="2" stroke="#fff" stroke-width="3"/><rect x="13" y="13" width="7" height="7" fill="#fff"/><path d="M12 2 V6 M21 2 V6 M12 27 V31 M21 27 V31 M2 12 H6 M2 21 H6 M27 12 H31 M27 21 H31" stroke="#fff" stroke-width="2.6" stroke-linecap="round"/></svg>
<div class="t " style="left:1248.0px;top:2345.0px;font-size:31px;color:#ffffff;letter-spacing:-0.1px;-webkit-text-stroke:1.2px #ffffff;">Add a processor</div>
<svg class="b" style="left:2111px;top:2346px;" width="30" height="30" viewBox="0 0 30 30" fill="none"><path d="M15 3.5 V26.5 M3.5 15 H26.5" stroke="#fff" stroke-width="2.8" stroke-linecap="round"/></svg>
<div class="t " style="left:2261.0px;top:405.3px;font-size:31px;color:#1c1c1c;letter-spacing:-0.25px;-webkit-text-stroke:1.0px #1c1c1c;">Processed output</div>
<div class="t " style="left:2889.0px;top:405.7px;font-size:31px;color:#1c1c1c;letter-spacing:0.0px;-webkit-text-stroke:1.0px #1c1c1c;">~34% decrease in size</div>
<svg class="b" style="left:3243px;top:410px;" width="27" height="24" viewBox="0 0 27 24" fill="none"><path d="M1.3 2.8 Q1.3 1.3 3.3 1.3 L23.7 1.3 Q25.7 1.3 25.7 2.8 L17.01 10.8 L17.01 19.68 L9.99 22.7 L9.99 10.8 Z" stroke="#555555" stroke-width="2.6" stroke-linejoin="round"/></svg>
<div class="b" style="left:2244px;top:499px;width:16px;height:16px;background:#1f5cff;border-radius:50%;"></div>
<div class="t " style="left:2276.0px;top:496.9px;font-size:24px;color:#1c1c1c;font-family:'Liberation Mono', monospace;-webkit-text-stroke:0.35px #1c1c1c;transform:scaleY(1.12);transform-origin:0 18.4px;">03:22:15 PM</div>
<div class="b" style="left:2451.5px;top:487.3px;width:97.09999999999991px;height:39.400000000000034px;background:#fef8d6;border:2.5px solid #d6b230;border-radius:20px;"></div>
<div class="t" style="left:2451.5px;top:487.3px;width:97.09999999999991px;height:39.4px;line-height:39.4px;text-align:center;font-size:24.5px;color:#7a6414;-webkit-text-stroke:0.4px #7a6414;">warn</div>
<div class="t " style="left:2566.0px;top:496.9px;font-size:24px;color:#1c1c1c;font-family:'Liberation Mono', monospace;-webkit-text-stroke:0.35px #1c1c1c;transform:scaleY(1.12);transform-origin:0 18.4px;">[Thu Oct 16 04:52:15 2025] [risk:warn] [pid 8…</div>
<svg class="b" style="left:3262.5px;top:492.0px;" width="21" height="30" viewBox="0 0 21 30" fill="none"><path d="M5.3 5.3 L15.7 15.0 L5.3 24.7" stroke="#1c1c1c" stroke-width="2.6" stroke-linecap="round" stroke-linejoin="round"/></svg>
<div class="b" style="left:2244px;top:571px;width:16px;height:16px;background:#1f5cff;border-radius:50%;"></div>
<div class="t " style="left:2276.0px;top:568.9px;font-size:24px;color:#1c1c1c;font-family:'Liberation Mono', monospace;-webkit-text-stroke:0.35px #1c1c1c;transform:scaleY(1.12);transform-origin:0 18.4px;">03:22:15 PM</div>
<div class="b" style="left:2451.5px;top:559.3px;width:97.09999999999991px;height:39.40000000000009px;background:#fef8d6;border:2.5px solid #d6b230;border-radius:20px;"></div>
<div class="t" style="left:2451.5px;top:559.3px;width:97.09999999999991px;height:39.4px;line-height:39.4px;text-align:center;font-size:24.5px;color:#7a6414;-webkit-text-stroke:0.4px #7a6414;">warn</div>
<div class="t " style="left:2566.0px;top:568.9px;font-size:24px;color:#1c1c1c;font-family:'Liberation Mono', monospace;-webkit-text-stroke:0.35px #1c1c1c;transform:scaleY(1.12);transform-origin:0 18.4px;">[Thu Oct 16 04:52:15 2025] [demonstrate:warn]…</div>
<svg class="b" style="left:3262.5px;top:564.0px;" width="21" height="30" viewBox="0 0 21 30" fill="none"><path d="M5.3 5.3 L15.7 15.0 L5.3 24.7" stroke="#1c1c1c" stroke-width="2.6" stroke-linecap="round" stroke-linejoin="round"/></svg>
<div class="b" style="left:2244px;top:643px;width:16px;height:16px;background:#1f5cff;border-radius:50%;"></div>
<div class="t " style="left:2276.0px;top:640.9px;font-size:24px;color:#1c1c1c;font-family:'Liberation Mono', monospace;-webkit-text-stroke:0.35px #1c1c1c;transform:scaleY(1.12);transform-origin:0 18.4px;">03:22:15 PM</div>
<div class="b" style="left:2451.5px;top:631.3px;width:90.0px;height:39.40000000000009px;background:#fdecea;border:2.5px solid #c4321a;border-radius:20px;"></div>
<div class="t" style="left:2451.5px;top:631.3px;width:90.0px;height:39.4px;line-height:39.4px;text-align:center;font-size:24.5px;color:#c4321a;-webkit-text-stroke:0.4px #c4321a;">fatal</div>
<div class="t " style="left:2560.0px;top:640.9px;font-size:24px;color:#1c1c1c;font-family:'Liberation Mono', monospace;-webkit-text-stroke:0.35px #1c1c1c;transform:scaleY(1.12);transform-origin:0 18.4px;">[Thu Oct 16 04:52:15 2025] [user:crit] [pid 19…</div>
<svg class="b" style="left:3262.5px;top:636.0px;" width="21" height="30" viewBox="0 0 21 30" fill="none"><path d="M5.3 5.3 L15.7 15.0 L5.3 24.7" stroke="#1c1c1c" stroke-width="2.6" stroke-linecap="round" stroke-linejoin="round"/></svg>
<div class="b" style="left:2244px;top:715px;width:16px;height:16px;background:#1f5cff;border-radius:50%;"></div>
<div class="t " style="left:2276.0px;top:712.9px;font-size:24px;color:#1c1c1c;font-family:'Liberation Mono', monospace;-webkit-text-stroke:0.35px #1c1c1c;transform:scaleY(1.12);transform-origin:0 18.4px;">03:22:15 PM</div>
<div class="b" style="left:2451.5px;top:703.3px;width:96.19999999999982px;height:39.40000000000009px;background:#fdecea;border:2.5px solid #c4321a;border-radius:20px;"></div>
<div class="t" style="left:2451.5px;top:703.3px;width:96.19999999999982px;height:39.4px;line-height:39.4px;text-align:center;font-size:24.5px;color:#c4321a;-webkit-text-stroke:0.4px #c4321a;">error</div>
<div class="t " style="left:2566.0px;top:712.9px;font-size:24px;color:#1c1c1c;font-family:'Liberation Mono', monospace;-webkit-text-stroke:0.35px #1c1c1c;transform:scaleY(1.12);transform-origin:0 18.4px;">[Thu Oct 16 04:52:15 2025] [mike:error] [pid …</div>
<svg class="b" style="left:3262.5px;top:708.0px;" width="21" height="30" viewBox="0 0 21 30" fill="none"><path d="M5.3 5.3 L15.7 15.0 L5.3 24.7" stroke="#1c1c1c" stroke-width="2.6" stroke-linecap="round" stroke-linejoin="round"/></svg>
<div class="b" style="left:2228px;top:759px;width:1076px;height:72px;background:#dae8f8;"></div>
<div class="b" style="left:2244px;top:787px;width:16px;height:16px;background:#1f5cff;border-radius:50%;"></div>
<div class="t " style="left:2276.0px;top:784.9px;font-size:24px;color:#1c1c1c;font-family:'Liberation Mono', monospace;-webkit-text-stroke:0.35px #1c1c1c;transform:scaleY(1.12);transform-origin:0 18.4px;">03:22:15 PM</div>
<div class="b" style="left:2451.5px;top:775.3px;width:90.0px;height:39.40000000000009px;background:#fdecea;border:2.5px solid #c4321a;border-radius:20px;"></div>
<div class="t" style="left:2451.5px;top:775.3px;width:90.0px;height:39.4px;line-height:39.4px;text-align:center;font-size:24.5px;color:#c4321a;-webkit-text-stroke:0.4px #c4321a;">fatal</div>
<div class="t " style="left:2560.0px;top:784.9px;font-size:24px;color:#1c1c1c;font-family:'Liberation Mono', monospace;-webkit-text-stroke:0.35px #1c1c1c;transform:scaleY(1.12);transform-origin:0 18.4px;">[Thu Oct 16 04:52:15 2025] [transfer:crit] [pi…</div>
<svg class="b" style="left:3256.2px;top:785.5px;" width="31" height="21" viewBox="0 0 31 21" fill="none"><path d="M5.3 5.3 L15.5 15.7 L25.7 5.3" stroke="#1c1c1c" stroke-width="2.6" stroke-linecap="round" stroke-linejoin="round"/></svg>
<div class="b" style="left:2228px;top:831px;width:1076px;height:1006px;background:#eff6fd;"></div>
<div class="b" style="left:2244px;top:847px;width:1044px;height:977px;background:#f8f8f8;border:2px solid #e4e4e4;border-radius:12px;box-shadow:0 2px 2px rgba(0,0,0,0.08);"></div>
<div class="t " style="left:2277.5px;top:899.6px;font-size:30px;color:#1c1c1c;-webkit-text-stroke:1.5px #1c1c1c;">Log</div>
<div class="t " style="left:2287.0px;top:1000.2px;font-size:24px;color:#1c1c1c;font-family:'Liberation Mono', monospace;-webkit-text-stroke:0.35px #1c1c1c;transform:scaleY(1.12);transform-origin:0 18.4px;">_type</div>
<div class="t " style="left:2509.0px;top:1000.2px;font-size:24px;color:#1c1c1c;font-family:'Liberation Mono', monospace;-webkit-text-stroke:0.35px #1c1c1c;transform:scaleY(1.12);transform-origin:0 18.4px;">log</div>
<div class="b" style="left:2246px;top:1048px;width:1040px;height:2px;background:#e4e4e4;"></div>
<div class="b" style="left:2246px;top:1050px;width:1040px;height:81px;background:#bff6bd;"></div>
<div class="b" style="left:2246px;top:1131px;width:1040px;height:2px;background:#e4e4e4;"></div>
<div class="b" style="left:2246px;top:1133px;width:1040px;height:80.5px;background:#bff6bd;"></div>
<div class="b" style="left:2246px;top:1213.5px;width:1040px;height:2.0px;background:#e4e4e4;"></div>
<div class="t " style="left:2287.0px;top:1082.2px;font-size:24px;color:#1c1c1c;font-family:'Liberation Mono', monospace;-webkit-text-stroke:0.35px #1c1c1c;transform:scaleY(1.12);transform-origin:0 18.4px;">severity_text</div>
<div class="t " style="left:2509.0px;top:1082.2px;font-size:24px;color:#1c1c1c;font-family:'Liberation Mono', monospace;-webkit-text-stroke:0.35px #1c1c1c;transform:scaleY(1.12);transform-origin:0 18.4px;">fatal</div>
<div class="t " style="left:2287.0px;top:1163.6px;font-size:24px;color:#1c1c1c;font-family:'Liberation Mono', monospace;-webkit-text-stroke:0.35px #1c1c1c;transform:scaleY(1.12);transform-origin:0 18.4px;">timestamp</div>
<div class="t " style="left:2509.0px;top:1163.6px;font-size:24px;color:#3a9a48;font-family:'Liberation Mono', monospace;-webkit-text-stroke:0.35px #3a9a48;transform:scaleY(1.12);transform-origin:0 18.4px;">1760590335000</div>
<div class="t " style="left:2801.0px;top:1166.2px;font-size:20px;color:#1c1c1c;font-family:'Liberation Mono', monospace;-webkit-text-stroke:0.35px #1c1c1c;transform:scaleY(1.12);transform-origin:0 15.3px;">2025, Oct 16, 04:52:15.000 AM UTC</div>
<svg class="b" style="left:3217.0px;top:1160.0px;" width="27" height="27" viewBox="0 0 27 27" fill="none"><circle cx="13.5" cy="13.5" r="12.0" stroke="#1c1c1c" stroke-width="3"/><path d="M13.5 6.4799999999999995 V13.5 H20.52" stroke="#1c1c1c" stroke-width="3" stroke-linecap="round" stroke-linejoin="round"/></svg>
<div class="t " style="left:2277.5px;top:1256.1px;font-size:30px;color:#1c1c1c;-webkit-text-stroke:1.5px #1c1c1c;">Body</div>
<div class="t " style="left:2286.0px;top:1357.7px;font-size:24px;color:#1c1c1c;font-family:'Liberation Mono', monospace;-webkit-text-stroke:0.35px #1c1c1c;transform:scaleY(1.12);transform-origin:0 18.4px;">[Thu Oct 16 04:52:15 2025] [transfer:crit] [pid 6282:tid 2992]</div>
<div class="t " style="left:2286.0px;top:1405.5px;font-size:24px;color:#1c1c1c;font-family:'Liberation Mono', monospace;-webkit-text-stroke:0.35px #1c1c1c;transform:scaleY(1.12);transform-origin:0 18.4px;">[client: 216.241.50.73] Try to transmit the HDD program, maybe it</div>
<div class="t " style="left:2286.0px;top:1453.3px;font-size:24px;color:#1c1c1c;font-family:'Liberation Mono', monospace;-webkit-text-stroke:0.35px #1c1c1c;transform:scaleY(1.12);transform-origin:0 18.4px;">will quantify the virtual sensor!</div>
<div class="b" style="left:2246px;top:1503px;width:1040px;height:2px;background:#e4e4e4;"></div>
<div class="t " style="left:2278.5px;top:1545.9px;font-size:30px;color:#1c1c1c;letter-spacing:0.8px;-webkit-text-stroke:1.5px #1c1c1c;">Attributes</div>
<div class="b" style="left:2246px;top:1617px;width:1040px;height:79px;background:#bff6bd;"></div>
<div class="b" style="left:2246px;top:1696px;width:1040px;height:2.5px;background:#e4e4e4;"></div>
<div class="b" style="left:2246px;top:1698.5px;width:1040px;height:80.0px;background:#bff6bd;"></div>
<div class="b" style="left:2246px;top:1778.5px;width:1040px;height:2.0px;background:#e4e4e4;"></div>
<div class="t " style="left:2286.0px;top:1647.6px;font-size:24px;color:#1c1c1c;font-family:'Liberation Mono', monospace;-webkit-text-stroke:0.35px #1c1c1c;transform:scaleY(1.12);transform-origin:0 18.4px;">client_ip</div>
<div class="t " style="left:2452.0px;top:1647.6px;font-size:24px;color:#1c1c1c;font-family:'Liberation Mono', monospace;-webkit-text-stroke:0.35px #1c1c1c;transform:scaleY(1.12);transform-origin:0 18.4px;">216.241.50.73</div>
<div class="t " style="left:2286.0px;top:1729.4px;font-size:24px;color:#1c1c1c;font-family:'Liberation Mono', monospace;-webkit-text-stroke:0.35px #1c1c1c;transform:scaleY(1.12);transform-origin:0 18.4px;">module</div>
<div class="t " style="left:2452.0px;top:1729.4px;font-size:24px;color:#1c1c1c;font-family:'Liberation Mono', monospace;-webkit-text-stroke:0.35px #1c1c1c;transform:scaleY(1.12);transform-origin:0 18.4px;">transfer</div>
<script>(function(){var w=window.innerWidth;if(w&&Math.abs(w-3320)>2){document.body.style.zoom=(w/3320);}})();</script>
</body></html>
